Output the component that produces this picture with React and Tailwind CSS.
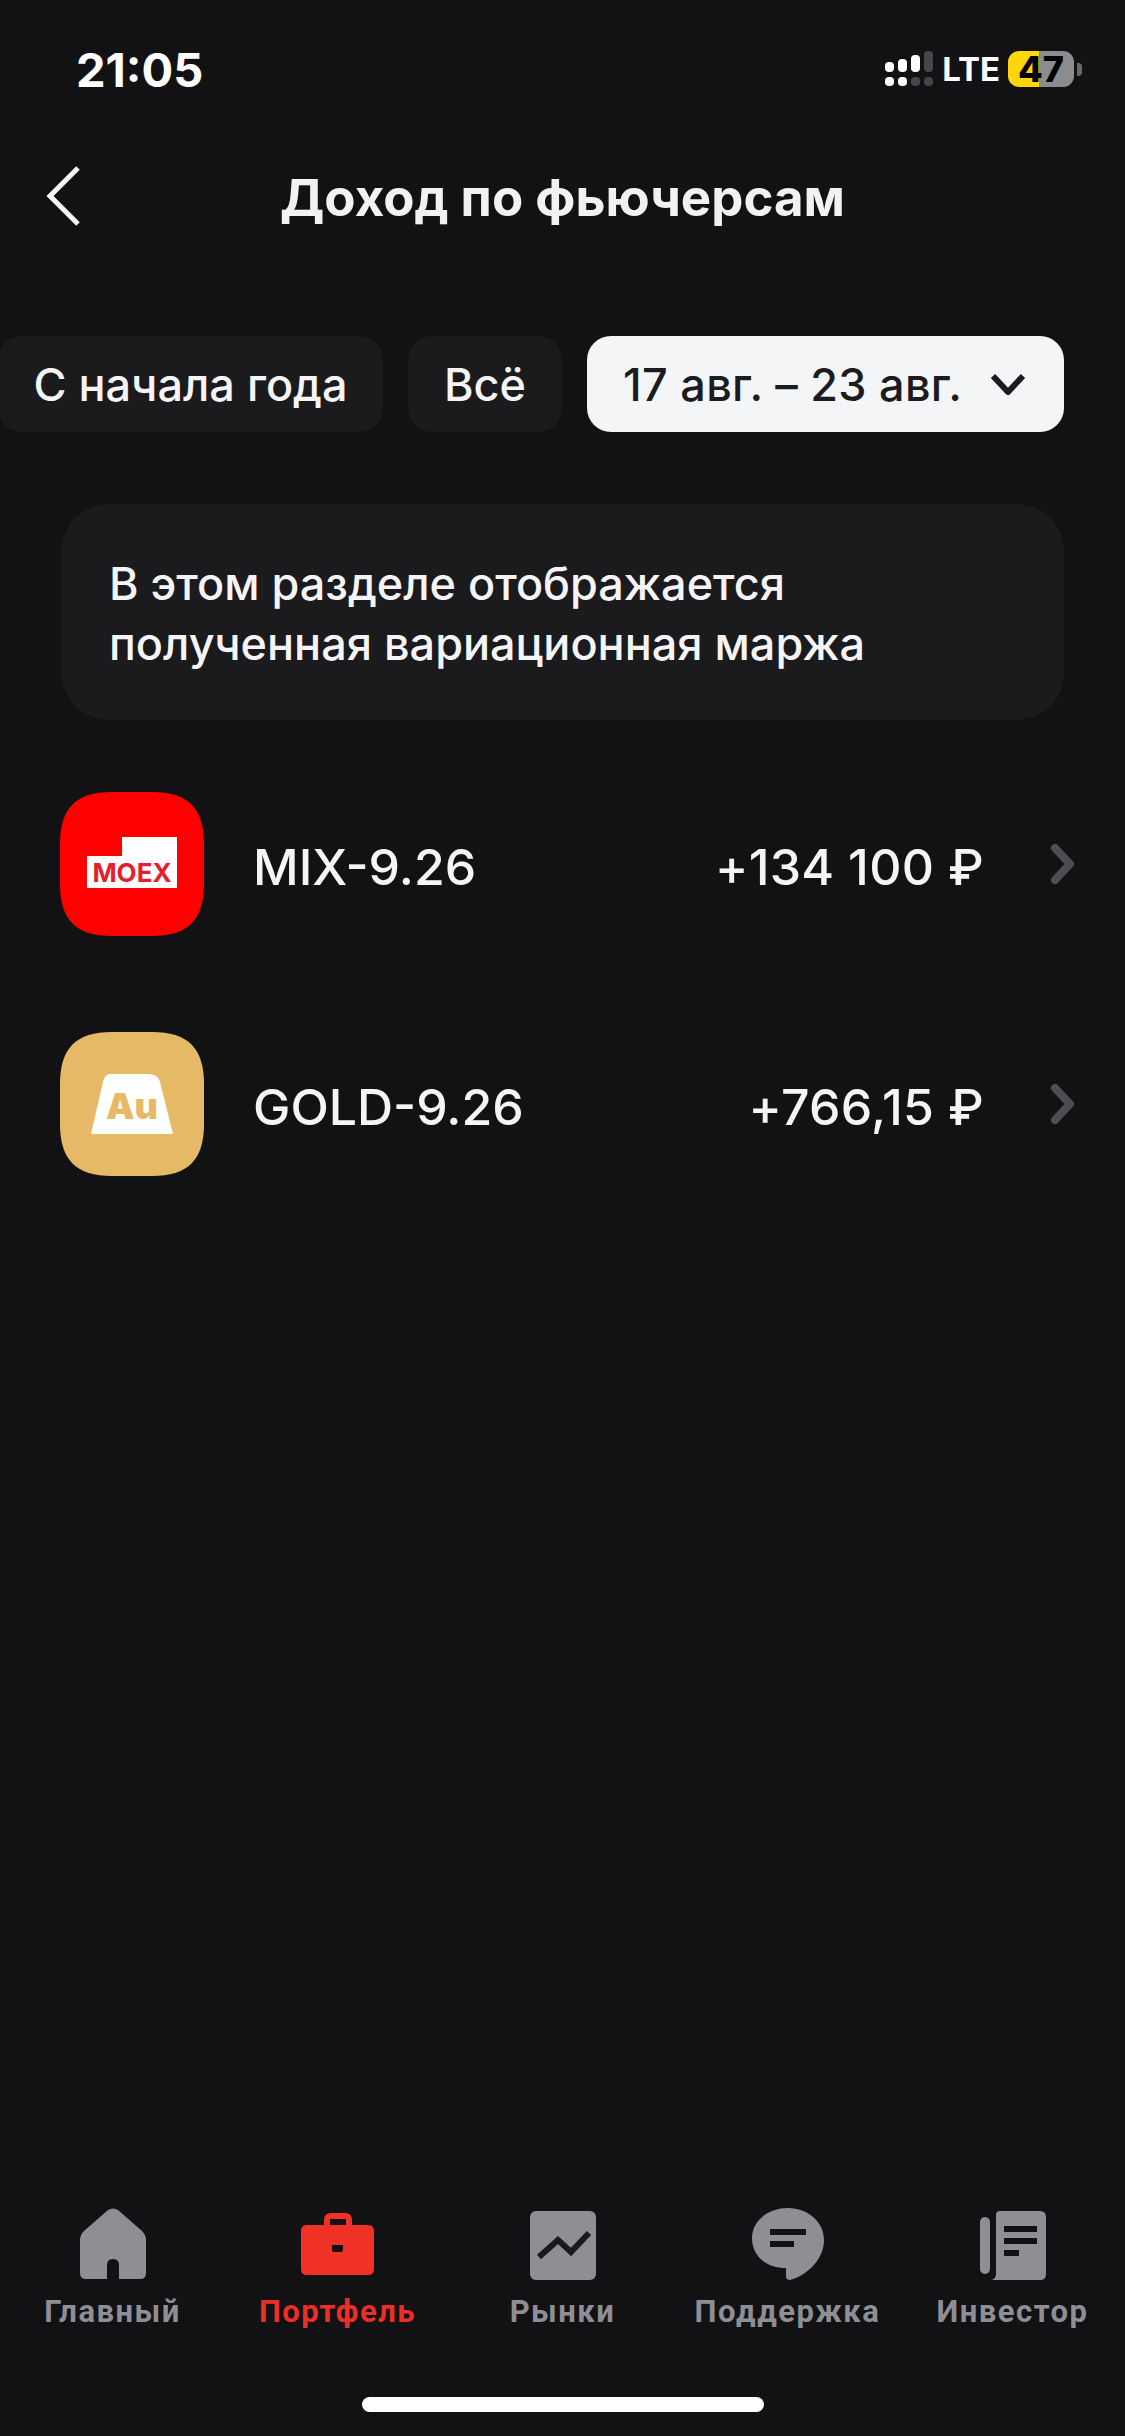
const SQUIRCLE = "M52 0H92C128 0 144 16 144 52V92C144 128 128 144 92 144H52C16 144 0 128 0 92V52C0 16 16 0 52 0Z";

function Signal() {
  return (
    <svg width="48" height="36" viewBox="0 0 48 36" className="mr-[9px]">
      <rect x="0" y="11" width="9" height="10" rx="4" fill="#fff" />
      <rect x="13" y="8" width="9" height="13" rx="4" fill="#fff" />
      <rect x="26" y="4" width="9" height="17" rx="4" fill="#fff" />
      <rect x="39" y="0" width="9" height="21" rx="4" fill="#45454a" />
      <rect x="0" y="26" width="9" height="9" rx="4" fill="#fff" />
      <rect x="13" y="26" width="9" height="9" rx="4" fill="#fff" />
      <rect x="26" y="26" width="9" height="9" rx="4" fill="#45454a" />
      <rect x="39" y="26" width="9" height="9" rx="4" fill="#45454a" />
    </svg>
  );
}

function Moex() {
  return (
    <svg width="144" height="144" viewBox="0 0 144 144" className="shrink-0">
      <path d={SQUIRCLE} fill="#ff0000" />
      <path d="M27 64H62V45H117V96H27Z" fill="#fff" />
      <text x="72" y="90" textAnchor="middle" fontFamily="Inter, sans-serif" fontWeight="700" fontSize="26" fill="#e3202b">MOEX</text>
    </svg>
  );
}

function Gold() {
  return (
    <svg width="144" height="144" viewBox="0 0 144 144" className="shrink-0">
      <path d={SQUIRCLE} fill="#e5b966" />
      <path d="M50 42H88Q98 42 100 50L113 102H31L43 50Q45 42 50 42Z" fill="#fff" />
      <text x="72" y="87" textAnchor="middle" fontFamily="Inter, sans-serif" fontWeight="900" fontSize="36" fill="#e5b966">Au</text>
    </svg>
  );
}

function RowChevron() {
  return (
    <svg width="26" height="42" viewBox="0 0 26 42" className="ml-[66px] shrink-0">
      <path d="M5 5L20 21L5 37" fill="none" stroke="#4d4d52" strokeWidth="8" strokeLinecap="round" strokeLinejoin="round" />
    </svg>
  );
}

function Row({ logo, name, value }) {
  return (
    <div className="flex items-center h-[144px]">
      {logo}
      <span className="ml-[49px] pt-[5px] text-[50px] leading-[60px] font-medium text-[#f5f5f7]">{name}</span>
      <span className="ml-auto pt-[5px] text-[50px] leading-[60px] font-medium tracking-[0.3px] text-[#f5f5f7]">{value}</span>
      <RowChevron />
    </div>
  );
}

const icons = {
  home: (
    <svg width="66" height="72" viewBox="0 0 66 72" fill="#8e8e95">
      <path d="M28 2Q33 -1 38 2L62 23Q66 27 66 32V65Q66 71 60 71H39V57Q39 51 33 51Q27 51 27 57V71H6Q0 71 0 65V32Q0 27 4 23Z" />
    </svg>
  ),
  case: (
    <svg width="74" height="72" viewBox="0 0 74 72" fill="#f03226">
      <path fillRule="evenodd" d="M30 5H44Q51 5 51 12V17H67Q73 17 73 23V61Q73 67 67 67H6Q0 67 0 61V23Q0 17 6 17H23V12Q23 5 30 5ZM29 11V17H45V11ZM31 37V42Q31 44 34 44H40Q42 44 42 42V37Z" />
    </svg>
  ),
  markets: (
    <svg width="66" height="72" viewBox="0 0 66 72">
      <rect y="3" width="66" height="69" rx="6" fill="#8e8e95" />
      <path d="M9 49L28 32L41 44L59 25" fill="none" stroke="#1a1a1e" strokeWidth="6" />
    </svg>
  ),
  support: (
    <svg width="72" height="72" viewBox="0 0 72 72" fill="#8e8e95">
      <path d="M36 0C56 0 72 14 72 32C72 52 54 68 38 72Q34 72 34 68V60C14 60 0 48 0 30C0 13 16 0 36 0Z" />
      <path d="M18 21H54V27H18ZM18 33H42V39H18Z" fill="#121215" />
    </svg>
  ),
  investor: (
    <svg width="66" height="72" viewBox="0 0 66 72" fill="#8e8e95">
      <rect x="0" y="9" width="10" height="57" rx="5" />
      <path d="M20 3H60Q66 3 66 9V66Q66 72 60 72H12Q16 70 16 66V7Q16 3 20 3Z" />
      <path d="M24 18H57V24H24ZM24 30H57V36H24ZM24 42H39V48H24Z" fill="#121215" />
    </svg>
  ),
};

const tabs = [
  { key: "home", label: "Главный", color: "text-[#8e8e95]" },
  { key: "case", label: "Портфель", color: "text-[#ec2f26]" },
  { key: "markets", label: "Рынки", color: "text-[#8e8e95]" },
  { key: "support", label: "Поддержка", color: "text-[#8e8e95]" },
  { key: "investor", label: "Инвестор", color: "text-[#8e8e95]" },
];

export default function App() {
  return (
    <div className="w-[1125px] h-[2436px] bg-[#121215] flex flex-col overflow-hidden font-['Inter',sans-serif] text-[#f5f5f7]">
      {/* status bar */}
      <div className="h-[138px] shrink-0 flex items-center pl-[76px] pr-[43px]">
        <span className="text-[47px] leading-none font-bold text-white">21:05</span>
        <div className="ml-auto flex items-center">
          <Signal />
          <span className="text-[33px] leading-none font-bold text-white mr-[8px]">LTE</span>
          <div className="w-[66px] h-[36px] rounded-[11px] bg-[linear-gradient(90deg,#ffd60a_47%,#8c8c8e_47%)] flex items-center justify-center text-[36px] leading-none font-extrabold text-black">47</div>
          <div className="w-[5px] h-[13px] ml-[3px] rounded-r-[4px] bg-[#6a6a6c]" />
        </div>
      </div>

      {/* header */}
      <div className="h-[120px] shrink-0 flex items-center relative justify-center">
        <svg width="34" height="60" viewBox="0 0 34 60" className="absolute left-[46px] top-[28px]">
          <path d="M32 2L4 30L32 58" fill="none" stroke="#f5f5f7" strokeWidth="5" />
        </svg>
        <h1 className="text-[51px] leading-[60px] font-bold text-[#f2f2f4]">Доход по фьючерсам</h1>
      </div>

      {/* period chips */}
      <div className="mt-[78px] h-[96px] shrink-0 flex gap-[25px] ml-[-2px]">
        <div className="w-[385px] rounded-[24px] bg-[#1b1b1e] flex items-center justify-center pt-[2px] text-[45px] font-medium">С начала года</div>
        <div className="w-[154px] rounded-[24px] bg-[#1b1b1e] flex items-center justify-center pt-[2px] text-[45px] font-medium">Всё</div>
        <div className="w-[477px] rounded-[24px] bg-[#f4f5f7] flex items-center pl-[36px] pt-[2px] text-[45px] font-medium tracking-[0.3px] text-[#1c1c20]">
          <span>17 авг. – 23 авг.</span>
          <svg width="36" height="24" viewBox="0 0 36 24" className="ml-[28px] shrink-0">
            <path d="M3 3L18 19L33 3" fill="none" stroke="#1c1c20" strokeWidth="6" strokeLinejoin="round" />
          </svg>
        </div>
      </div>

      {/* notice */}
      <div className="mt-[72px] mx-[61px] h-[216px] shrink-0 rounded-[48px] bg-[#1b1b1e] flex items-center pl-[48px] pt-[3px] text-[45px] leading-[60px] font-medium">
        <p>В этом разделе отображается<br />полученная вариационная маржа</p>
      </div>

      {/* list */}
      <div className="mt-[72px] pl-[60px] pr-[49px] flex flex-col gap-[96px]">
        <Row logo={<Moex />} name="MIX-9.26" value="+134 100 ₽" />
        <Row logo={<Gold />} name="GOLD-9.26" value="+766,15 ₽" />
      </div>

      <div className="flex-1" />

      {/* tab bar */}
      <div className="h-[228px] shrink-0 flex flex-col">
        <div className="grid grid-cols-5">
          {tabs.map((t) => (
            <div key={t.key} className="flex flex-col items-center">
              <div className="h-[72px] flex items-start justify-center">{icons[t.key]}</div>
              <span className={`mt-[14px] text-[31px] leading-[36px] font-['Roboto',sans-serif] font-bold tracking-[1.5px] ${t.color}`}>{t.label}</span>
            </div>
          ))}
        </div>
        <div className="mt-auto mb-[24px] mx-auto w-[402px] h-[15px] rounded-full bg-white" />
      </div>
    </div>
  );
}
